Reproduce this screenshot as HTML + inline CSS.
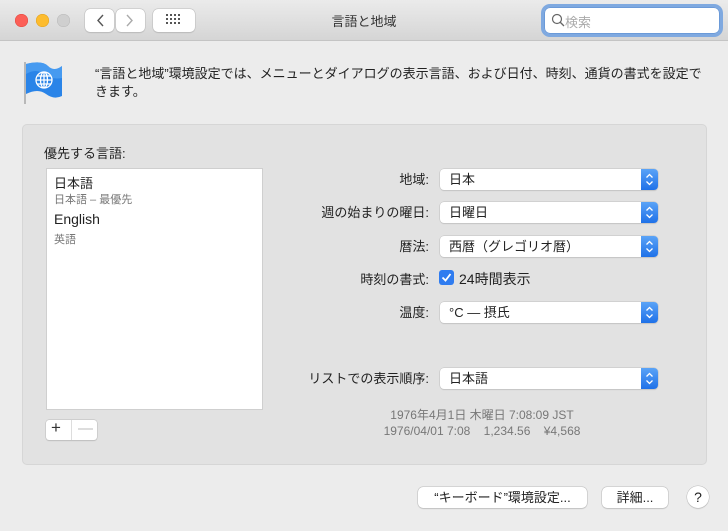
<!DOCTYPE html>
<html><head><meta charset="utf-8"><style>
*{margin:0;padding:0;box-sizing:border-box}
body{width:728px;height:531px;background:#ececec;font-family:"Liberation Sans","Noto Sans CJK JP",sans-serif;position:relative;overflow:hidden;color:#222}
.a{position:absolute}
.tb{left:0;top:0;width:728px;height:41px;background:linear-gradient(#ebebeb,#d5d5d5);border-bottom:1px solid #c4c4c4}
.dot{width:13px;height:13px;border-radius:50%;top:14px}
.btn{background:#fff;border-radius:5px;box-shadow:0 0 0 .5px #bbb,0 1px 1px rgba(0,0,0,.15)}
.pop{left:440px;width:218px;height:21px;background:#fff;border-radius:4px;box-shadow:0 0 0 .5px #c0c0c0,0 1px 1px rgba(0,0,0,.12);font-size:13px;line-height:21px;padding-left:9px}
.pop:after{content:"";position:absolute;right:0;top:0;width:17px;height:21px;border-radius:0 4px 4px 0;background:linear-gradient(#5aa3f7,#1f71e8)}
.pop svg{position:absolute;right:0;top:0;z-index:2}
.lab{right:299px;font-size:13px;text-align:right;white-space:nowrap}
</style></head><body>
<div class="a tb"></div>
<div class="a dot" style="left:15px;background:#fc5f57;box-shadow:inset 0 0 0 .5px #de4a41"></div>
<div class="a dot" style="left:36px;background:#fdbc2e;box-shadow:inset 0 0 0 .5px #dea123"></div>
<div class="a dot" style="left:57px;background:#cfcfcf;box-shadow:inset 0 0 0 .5px #b8b8b8"></div>
<div class="a btn" style="left:85px;top:9px;width:29px;height:23px"></div>
<div class="a btn" style="left:116px;top:9px;width:29px;height:23px"></div>
<svg class="a" style="left:85px;top:9px" width="60" height="23"><path d="M18 6l-5 5.5 5 5.5" fill="none" stroke="#555" stroke-width="1.4"/><path d="M42 6l5 5.5-5 5.5" fill="none" stroke="#aaa" stroke-width="1.4"/></svg>
<div class="a btn" style="left:153px;top:9px;width:42px;height:23px"></div>
<svg class="a" style="left:166px;top:14px" width="16" height="12"><g fill="#555"><rect x="0" y="0" width="2" height="2"/><rect x="4" y="0" width="2" height="2"/><rect x="8" y="0" width="2" height="2"/><rect x="12" y="0" width="2" height="2"/><rect x="0" y="4" width="2" height="2"/><rect x="4" y="4" width="2" height="2"/><rect x="8" y="4" width="2" height="2"/><rect x="12" y="4" width="2" height="2"/><rect x="0" y="8" width="2" height="2"/><rect x="4" y="8" width="2" height="2"/><rect x="8" y="8" width="2" height="2"/><rect x="12" y="8" width="2" height="2"/></g></svg>
<div class="a" style="left:0;width:728px;top:11px;text-align:center;font-size:13px;color:#333">言語と地域</div>
<div class="a" style="left:544px;top:7px;width:176px;height:27px;border-radius:6px;background:#fff;box-shadow:0 0 0 3px #7fa9e0,inset 0 0 0 1px #6b9ad8"></div>
<svg class="a" style="left:551px;top:13px" width="14" height="14"><circle cx="6" cy="6" r="4.5" fill="none" stroke="#666" stroke-width="1.2"/><path d="M9 9l4 4" stroke="#666" stroke-width="1.3"/></svg>
<div class="a" style="left:565px;top:12px;font-size:13px;color:#aaa">検索</div>
<svg class="a" style="left:22px;top:58px" width="44" height="48"><rect x="2" y="4" width="2" height="42" fill="#b8b8b8"/><path d="M4 6 Q20 2 26 8 T40 8 V38 Q32 42 24 36 T4 36Z" fill="#2a84e8"/><path d="M4 6 Q20 2 26 8 T40 8 V20 Q30 22 22 16 T4 16Z" fill="#5aa8f5" opacity=".6"/><g fill="none" stroke="#fff" stroke-width="1.3"><circle cx="22" cy="22" r="8"/><ellipse cx="22" cy="22" rx="3.5" ry="8"/><path d="M14 22h16M15.5 18h13M15.5 26h13M22 14v16"/></g></svg>
<div class="a" style="left:95px;top:65px;font-size:13px;line-height:18px;width:610px">“言語と地域”環境設定では、メニューとダイアログの表示言語、および日付、時刻、通貨の書式を設定できます。</div>
<div class="a" style="left:22px;top:124px;width:685px;height:341px;background:#e2e2e2;border:1px solid #d6d6d6;border-radius:5px"></div>
<div class="a" style="left:44px;top:143px;font-size:13px">優先する言語:</div>
<div class="a" style="left:46px;top:168px;width:217px;height:242px;background:#fff;border:1px solid #cfcfcf"></div>
<div class="a" style="left:54px;top:173px;font-size:13px">日本語</div>
<div class="a" style="left:54px;top:191px;font-size:11px;color:#777">日本語 – 最優先</div>
<div class="a" style="left:54px;top:211px;font-size:14px">English</div>
<div class="a" style="left:54px;top:231px;font-size:11px;color:#777">英語</div>
<div class="a btn" style="left:46px;top:420px;width:51px;height:20px;border-radius:3px"></div>
<div class="a" style="left:71px;top:420px;width:1px;height:20px;background:#ddd"></div>
<div class="a" style="left:51px;top:418px;font-size:17px;color:#333">+</div>
<div class="a" style="left:78px;top:420px;font-size:15px;color:#bbb">—</div>
<div class="a lab" style="top:169px">地域:</div>
<div class="a pop" style="top:169px">日本<svg width="17" height="21"><path d="M5.5 8.5l3-3 3 3M5.5 12.5l3 3 3-3" fill="none" stroke="#fff" stroke-width="1.3"/></svg></div>
<div class="a lab" style="top:202px">週の始まりの曜日:</div>
<div class="a pop" style="top:202px">日曜日<svg width="17" height="21"><path d="M5.5 8.5l3-3 3 3M5.5 12.5l3 3 3-3" fill="none" stroke="#fff" stroke-width="1.3"/></svg></div>
<div class="a lab" style="top:236px">暦法:</div>
<div class="a pop" style="top:236px">西暦（グレゴリオ暦）<svg width="17" height="21"><path d="M5.5 8.5l3-3 3 3M5.5 12.5l3 3 3-3" fill="none" stroke="#fff" stroke-width="1.3"/></svg></div>
<div class="a lab" style="top:269px">時刻の書式:</div>
<div class="a" style="left:439px;top:270px;width:15px;height:15px;border-radius:3px;background:#2f7cf0"></div>
<svg class="a" style="left:439px;top:270px" width="15" height="15"><path d="M3.5 7.5l3 3 5-6.5" fill="none" stroke="#fff" stroke-width="1.8"/></svg>
<div class="a" style="left:459px;top:269px;font-size:14px">24時間表示</div>
<div class="a lab" style="top:302px">温度:</div>
<div class="a pop" style="top:302px">°C — 摂氏<svg width="17" height="21"><path d="M5.5 8.5l3-3 3 3M5.5 12.5l3 3 3-3" fill="none" stroke="#fff" stroke-width="1.3"/></svg></div>
<div class="a lab" style="top:368px">リストでの表示順序:</div>
<div class="a pop" style="top:368px">日本語<svg width="17" height="21"><path d="M5.5 8.5l3-3 3 3M5.5 12.5l3 3 3-3" fill="none" stroke="#fff" stroke-width="1.3"/></svg></div>
<div class="a" style="left:340px;width:284px;top:407px;font-size:12px;line-height:16px;text-align:center;color:#777">1976年4月1日 木曜日 7:08:09 JST<br>1976/04/01 7:08&nbsp;&nbsp;&nbsp;&nbsp;1,234.56&nbsp;&nbsp;&nbsp;&nbsp;¥4,568</div>
<div class="a btn" style="left:418px;top:487px;width:169px;height:21px;font-size:13px;line-height:21px;text-align:center">“キーボード”環境設定...</div>
<div class="a btn" style="left:602px;top:487px;width:66px;height:21px;font-size:13px;line-height:21px;text-align:center">詳細...</div>
<div class="a btn" style="left:687px;top:486px;width:22px;height:22px;border-radius:50%;font-size:14px;line-height:22px;text-align:center">?</div>
</body></html>
